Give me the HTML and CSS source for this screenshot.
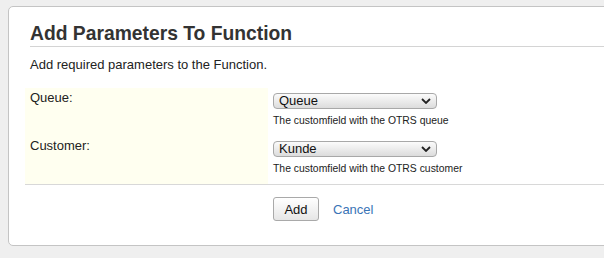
FILE: index.html
```html
<!DOCTYPE html>
<html lang="en">
<head>
    <meta charset="UTF-8">
    <title>Add Parameters To Function</title>
    <link rel="stylesheet" href="styles.css">
</head>
<body>
    <div class="panel">
        <h2 class="panel-title">Add Parameters To Function</h2>
        <p class="intro">Add required parameters to the Function.</p>

        <div class="fields">
            <div class="field-label">Queue:</div>
            <div class="field-value">
                <span class="select-wrap">
                    <select class="select"><option>Queue</option></select>
                    <svg class="chevron" width="10" height="6" viewBox="0 0 10 6"><path d="M1 1 L5 5 L9 1" fill="none" stroke="#222" stroke-width="1.8"/></svg>
                </span>
                <div class="hint">The customfield with the OTRS queue</div>
            </div>

            <div class="field-label">Customer:</div>
            <div class="field-value">
                <span class="select-wrap">
                    <select class="select"><option>Kunde</option></select>
                    <svg class="chevron" width="10" height="6" viewBox="0 0 10 6"><path d="M1 1 L5 5 L9 1" fill="none" stroke="#222" stroke-width="1.8"/></svg>
                </span>
                <div class="hint">The customfield with the OTRS customer</div>
            </div>
        </div>

        <div class="actions">
            <button class="btn">Add</button>
            <a href="#" class="cancel">Cancel</a>
        </div>
    </div>
</body>
</html>
```

FILE: styles.css
```css
body {
    margin: 0;
    padding: 6px 0 0 8px;
    background-color: #efefef;
    font-family: 'Liberation Sans', Arial, sans-serif;
    color: #222;
    overflow: hidden;
}

.panel {
    width: 640px;
    background-color: #fff;
    border: 1px solid #c4c4c4;
    border-radius: 5px;
    padding: 16px 16px 24px 16px;
}

.panel-title {
    margin: 0 0 0 5px;
    padding: 0 0 1px 0;
    font-size: 19.3px;
    line-height: 22px;
    font-weight: bold;
    color: #333;
    border-bottom: 1px solid #d4d4d4;
}

.intro {
    margin: 10px 0 0 5px;
    font-size: 13px;
    line-height: 15px;
}

.fields {
    display: grid;
    grid-template-columns: 243px 1fr;
    margin-top: 16px;
    border-bottom: 1px solid #d8d8d8;
}

.field-label {
    background-color: #fffff0;
    font-size: 13px;
    line-height: 15px;
    padding: 2px 0 0 5px;
    height: 46px;
}

.field-value {
    padding: 3px 0 0 5px;
}

.select-wrap {
    position: relative;
    display: inline-block;
}

.select {
    appearance: none;
    -webkit-appearance: none;
    width: 164px;
    height: 16px;
    margin: 0;
    padding: 0 0 0 5px;
    font-family: 'Liberation Sans', Arial, sans-serif;
    font-size: 13px;
    line-height: 14px;
    color: #111;
    border: 1px solid #a8a8a8;
    border-radius: 4px;
    background: linear-gradient(#fbfbfb, #dcdcdc);
    display: block;
}

.chevron {
    position: absolute;
    right: 6px;
    top: 5px;
    pointer-events: none;
}

.hint {
    font-size: 10.4px;
    line-height: 12px;
    margin-top: 6px;
    color: #222;
}

.actions {
    padding: 12px 0 0 248px;
    display: flex;
    align-items: center;
}

.btn {
    width: 46px;
    height: 24px;
    font-family: 'Liberation Sans', Arial, sans-serif;
    font-size: 13px;
    color: #111;
    background: linear-gradient(#ffffff, #e6e6e6);
    border: 1px solid #a9a9a9;
    border-radius: 3px;
    padding: 0;
}

.cancel {
    margin-left: 14px;
    font-size: 13px;
    color: #3a74b6;
    text-decoration: none;
}
```
